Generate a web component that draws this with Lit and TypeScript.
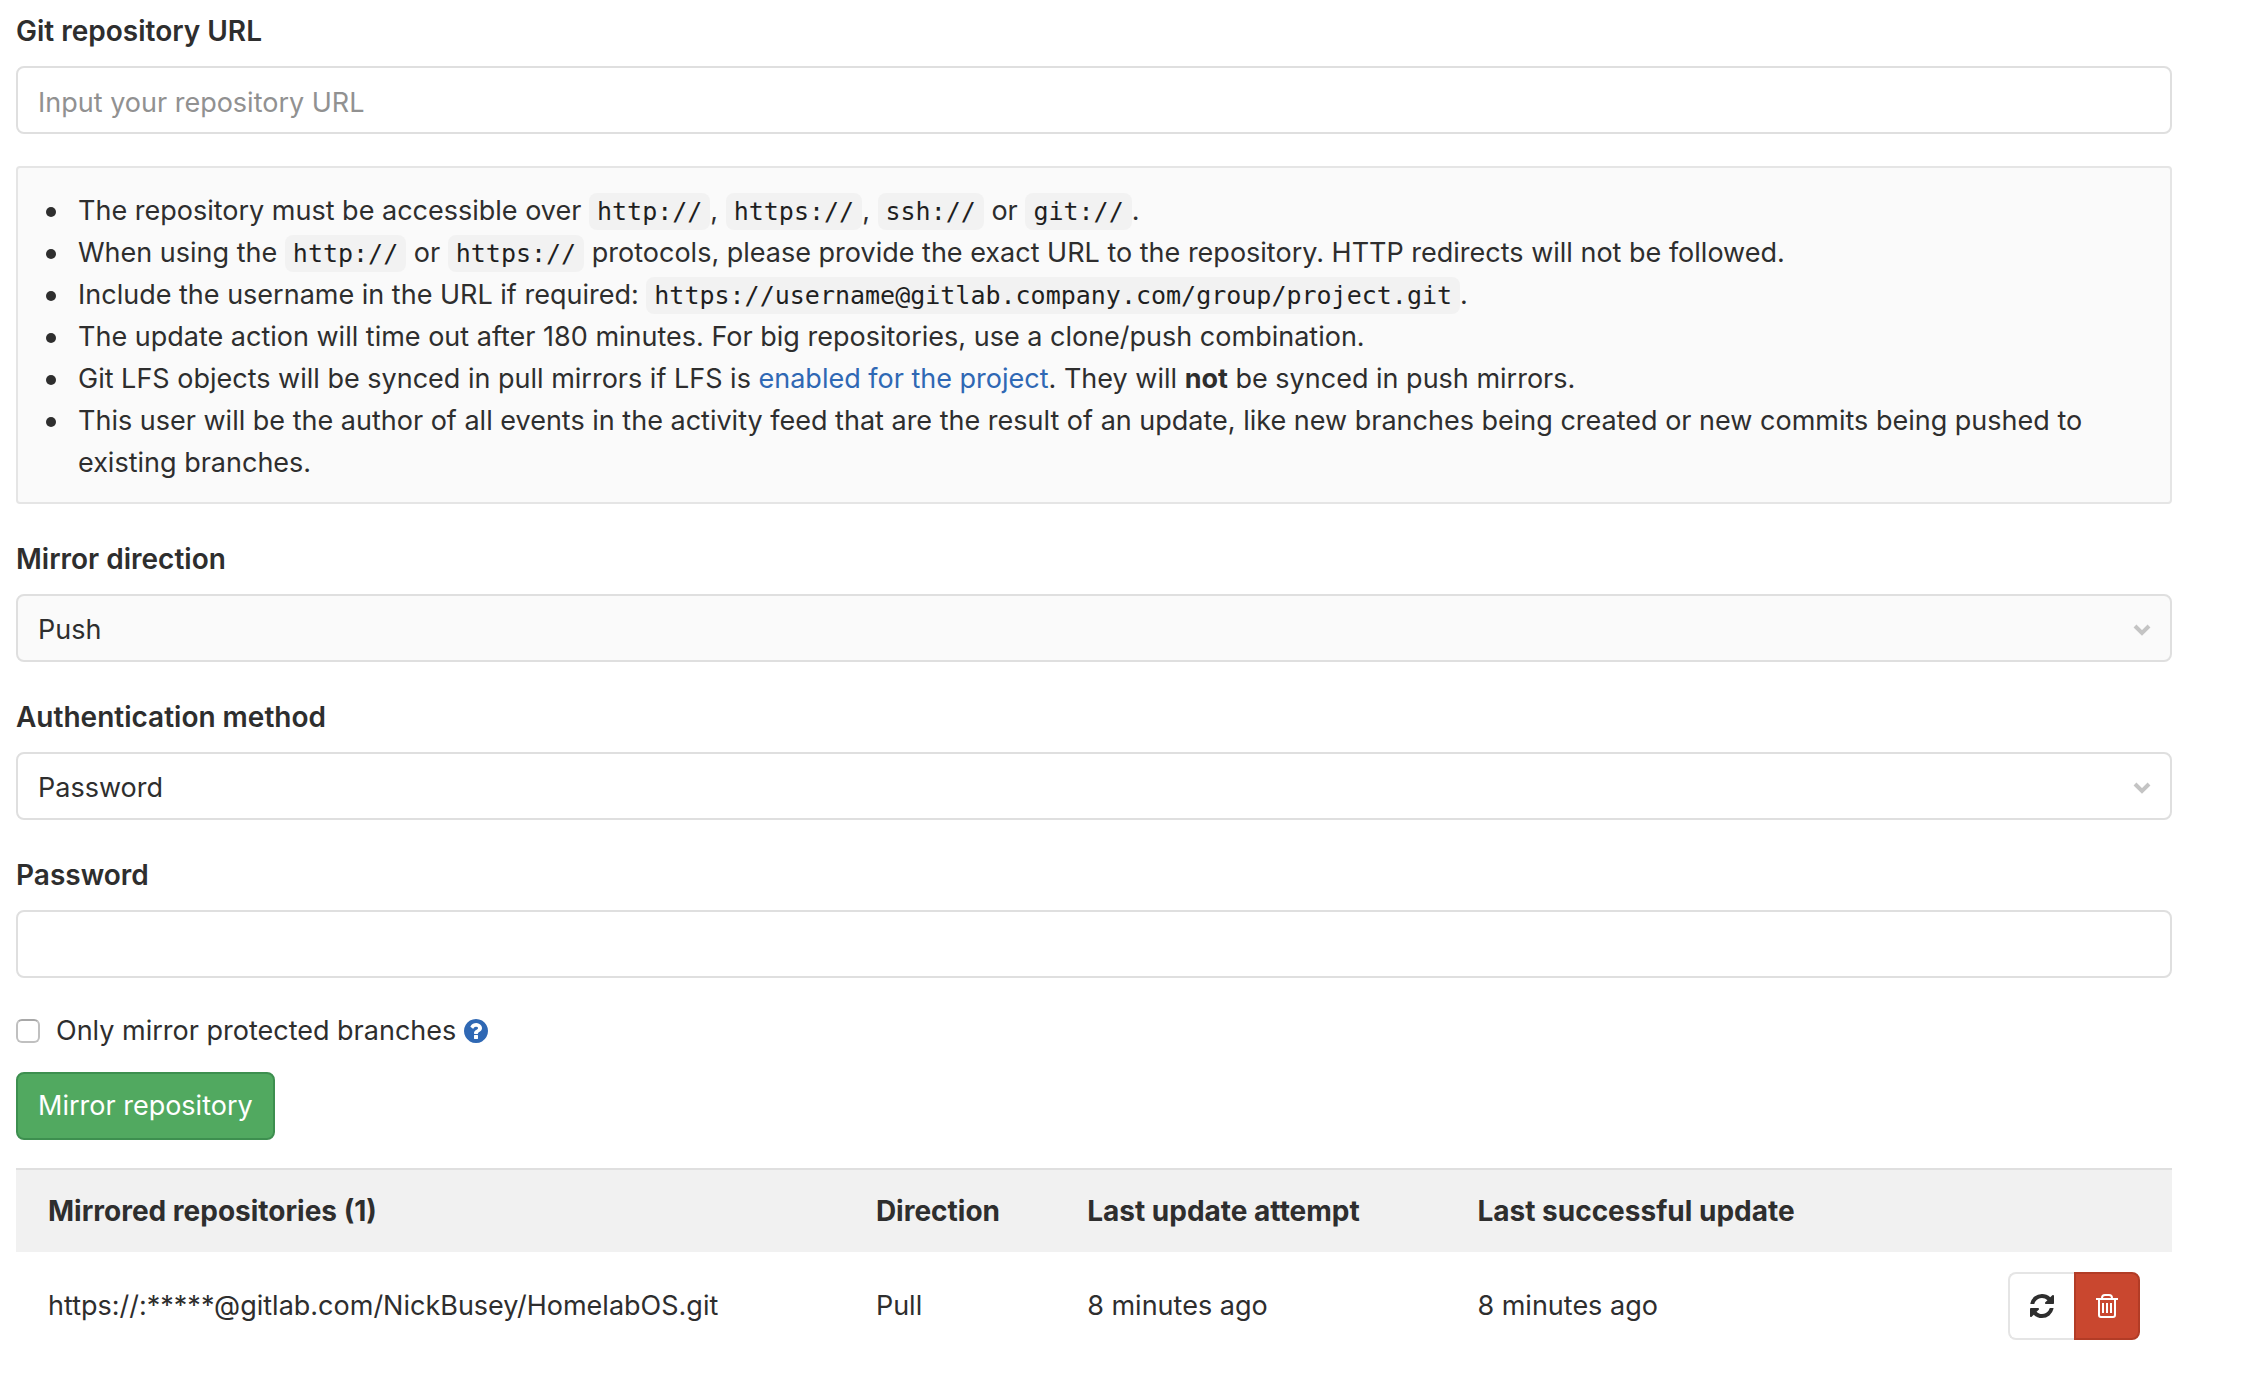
import { LitElement, html, css } from "lit";
import { customElement, state } from "lit/decorators.js";

interface Mirror {
  url: string;
  direction: string;
  lastAttempt: string;
  lastSuccess: string;
}

const chevron = html`<svg class="chevron" viewBox="0 0 18 12" aria-hidden="true">
  <path d="M2 2L9 9L16 2" fill="none" stroke="currentColor" stroke-width="4" />
</svg>`;

const helpIcon = html`<svg class="icon" viewBox="0 128 1536 1536" aria-hidden="true">
  <path
    fill="currentColor"
    d="M896 1376v-192q0-14-9-23t-23-9h-192q-14 0-23 9t-9 23v192q0 14 9 23t23 9h192q14 0 23-9t9-23zm256-672q0-88-55.5-163t-138.5-116-170-41q-243 0-371 213-15 24 8 42l132 100q7 6 19 6 16 0 25-12 53-68 86-92 34-24 86-24 48 0 85.5 26t37.5 59q0 38-20 61t-68 45q-63 28-115.5 86.5t-52.5 125.5v36q0 14 9 23t23 9h192q14 0 23-9t9-23q0-19 21.5-49.5t54.5-49.5q32-18 49-28.5t46-35 44.5-48 28-60.5 12.5-81zm384 192q0 209-103 385.5t-279.5 279.5-385.5 103-385.5-103-279.5-279.5-103-385.5 103-385.5 279.5-279.5 385.5-103 385.5 103 279.5 279.5 103 385.5z"
  />
</svg>`;

const refreshIcon = html`<svg class="icon" viewBox="0 0 1536 1536" aria-hidden="true">
  <path
    fill="currentColor"
    d="M1511 928q0 5-1 7-64 268-268 434.5t-478 166.5q-146 0-282.5-55t-243.5-157l-129 129q-19 19-45 19t-45-19-19-45v-448q0-26 19-45t45-19h448q26 0 45 19t19 45-19 45l-137 137q71 66 161 102t187 36q134 0 250-65t186-179q11-17 53-117 8-23 30-23h192q13 0 22.5 9.5t9.5 22.5zm25-800v448q0 26-19 45t-45 19h-448q-26 0-45-19t-19-45 19-45l138-138q-148-137-349-137-134 0-250 65t-186 179q-11 17-53 117-8 23-30 23h-199q-13 0-22.5-9.5t-9.5-22.5v-7q65-268 270-434.5t480-166.5q146 0 284 55.5t245 156.5l130-129q19-19 45-19t45 19 19 45z"
  />
</svg>`;

const trashIcon = html`<svg class="icon" viewBox="0 0 24 24" aria-hidden="true">
  <g fill="none" stroke="currentColor" stroke-width="2">
    <path d="M1 5H23" />
    <path d="M7 5V4Q7 1 10 1H14Q17 1 17 4V5" />
    <path d="M4 5V21Q4 23 6 23H18Q20 23 20 21V5" />
    <path d="M8 9V19M12 9V19M16 9V19" />
  </g>
</svg>`;

@customElement("app-root")
export class AppRoot extends LitElement {
  @state() private mirrors: Mirror[] = [
    {
      url: "https://:*****@gitlab.com/NickBusey/HomelabOS.git",
      direction: "Pull",
      lastAttempt: "8 minutes ago",
      lastSuccess: "8 minutes ago",
    },
  ];

  static styles = css`
    :host {
      display: block;
      padding: 8px 78px 16px 16px;
      background: #fff;
      color: #2e2e2e;
      font-family: Inter, "Liberation Sans", sans-serif;
      font-size: 27px;
      line-height: 42px;
    }
    * {
      box-sizing: border-box;
    }
    .form {
      display: flex;
      flex-direction: column;
      gap: 32px;
    }
    .field {
      display: flex;
      flex-direction: column;
      gap: 14px;
    }
    .label {
      padding-top: 2px;
      font-size: 28px;
      font-weight: 600;
    }
    .control {
      width: 100%;
      height: 68px;
      margin: 0;
      padding: 4px 20px 0;
      border: 2px solid #dfdfdf;
      border-radius: 8px;
      background: #fff;
      color: inherit;
      font: inherit;
      appearance: none;
    }
    .control::placeholder {
      color: #919191;
      opacity: 1;
    }
    .picker {
      display: grid;
      align-items: center;
    }
    .picker > * {
      grid-area: 1 / 1;
    }
    .muted {
      background: #fafafa;
    }
    .chevron {
      justify-self: end;
      width: 18px;
      height: 12px;
      margin-right: 21px;
      margin-top: 4px;
      color: #c4c4c4;
      pointer-events: none;
    }
    .well {
      padding: 22px 20px 18px;
      border: 2px solid #e5e5e5;
      border-radius: 4px;
      background: #fafafa;
    }
    .notes {
      margin: 0;
      padding: 0 0 0 40px;
      list-style: none;
    }
    .note::before {
      content: "";
      float: left;
      width: 10px;
      height: 10px;
      margin: 17px 22px 0 -32px;
      border-radius: 50%;
      background: currentColor;
    }
    .code {
      padding: 4px 8px;
      border-radius: 8px;
      background: #f2f2f2;
      color: #1f1f1f;
      font-family: "DejaVu Sans Mono", monospace;
      font-size: 25px;
      line-height: 30px;
    }
    .link {
      color: #2f68b4;
      text-decoration: none;
    }
    .strong {
      font-weight: 700;
    }
    .protect {
      display: flex;
      align-items: center;
      gap: 8px;
    }
    .choice {
      display: flex;
      align-items: center;
      gap: 16px;
    }
    .tick {
      width: 24px;
      height: 24px;
      margin: 0;
      border: 2px solid #c0c0c0;
      border-top-color: #a8a8a8;
      border-radius: 6px;
      background: #fff;
      appearance: none;
    }
    .tick:checked {
      background: #2f68b4;
    }
    .help {
      display: flex;
      color: #2f68b4;
    }
    .icon {
      display: block;
      width: 24px;
      height: 24px;
    }
    .button {
      height: 68px;
      padding: 0 20px;
      border: 2px solid #e5e5e5;
      border-radius: 8px;
      background: #fff;
      color: #2e2e2e;
      font: inherit;
      cursor: pointer;
    }
    .submit {
      margin: 20px 0 28px;
      border-color: #3d8f4f;
      background: #51a960;
      color: #fff;
    }
    .mirrors {
      width: 100%;
      border-collapse: separate;
      border-spacing: 0;
      table-layout: fixed;
      text-align: left;
    }
    .head,
    .cell {
      padding: 20px 32px;
      vertical-align: middle;
    }
    .head {
      border-top: 2px solid #dfdfdf;
      background: #f1f1f1;
      font-size: 28px;
      font-weight: 700;
    }
    .wide {
      width: 38.4%;
    }
    .narrow {
      width: 9.8%;
    }
    .medium {
      width: 18.1%;
    }
    .actions {
      display: flex;
      justify-content: flex-end;
    }
    .update,
    .remove {
      display: flex;
      align-items: center;
      justify-content: center;
      width: 66px;
      padding: 0;
    }
    .update {
      border-right: 0;
      border-radius: 8px 0 0 8px;
    }
    .remove {
      border-color: #b23c26;
      border-radius: 0 8px 8px 0;
      background: #c9472f;
      color: #fff;
    }
  `;

  private removeMirror(mirror: Mirror) {
    this.mirrors = this.mirrors.filter((m) => m !== mirror);
  }

  private renderNotes() {
    return html`<div class="well">
      <ul class="notes">
        <li class="note">
          The repository must be accessible over <code class="code">http://</code>,
          <code class="code">https://</code>, <code class="code">ssh://</code> or
          <code class="code">git://</code>.
        </li>
        <li class="note">
          When using the <code class="code">http://</code> or
          <code class="code">https://</code> protocols, please provide the exact URL to the
          repository. HTTP redirects will not be followed.
        </li>
        <li class="note">
          Include the username in the URL if required:
          <code class="code">https://username@gitlab.company.com/group/project.git</code>.
        </li>
        <li class="note">
          The update action will time out after 180 minutes. For big repositories, use a
          clone/push combination.
        </li>
        <li class="note">
          Git LFS objects will be synced in pull mirrors if LFS is
          <a class="link" href="#lfs">enabled for the project</a>. They will
          <b class="strong">not</b> be synced in push mirrors.
        </li>
        <li class="note">
          This user will be the author of all events in the activity feed that are the result
          of an update, like new branches being created or new commits being pushed to
          existing branches.
        </li>
      </ul>
    </div>`;
  }

  private renderMirror(mirror: Mirror) {
    return html`<tr>
      <td class="cell">${mirror.url}</td>
      <td class="cell">${mirror.direction}</td>
      <td class="cell">${mirror.lastAttempt}</td>
      <td class="cell">${mirror.lastSuccess}</td>
      <td class="cell">
        <div class="actions">
          <button class="button update" type="button" aria-label="Update now">
            ${refreshIcon}
          </button>
          <button
            class="button remove"
            type="button"
            aria-label="Remove"
            @click=${() => this.removeMirror(mirror)}
          >
            ${trashIcon}
          </button>
        </div>
      </td>
    </tr>`;
  }

  render() {
    return html`
      <form @submit=${(e: Event) => e.preventDefault()}>
        <div class="form">
          <div class="field">
            <label class="label" for="url">Git repository URL</label>
            <input class="control" id="url" type="text" placeholder="Input your repository URL" />
          </div>
          ${this.renderNotes()}
          <div class="field">
            <label class="label" for="direction">Mirror direction</label>
            <div class="picker">
              <select class="control muted" id="direction">
                <option>Push</option>
              </select>
              ${chevron}
            </div>
          </div>
          <div class="field">
            <label class="label" for="method">Authentication method</label>
            <div class="picker">
              <select class="control" id="method">
                <option>Password</option>
              </select>
              ${chevron}
            </div>
          </div>
          <div class="field">
            <label class="label" for="password">Password</label>
            <input class="control" id="password" type="password" autocomplete="new-password" />
          </div>
          <div class="protect">
            <label class="choice">
              <input class="tick" type="checkbox" />
              Only mirror protected branches
            </label>
            <a class="help" href="#protected-branches" aria-label="Help">${helpIcon}</a>
          </div>
        </div>
        <button class="button submit" type="submit">Mirror repository</button>
      </form>
      <table class="mirrors">
        <thead>
          <tr>
            <th class="head wide">Mirrored repositories (${this.mirrors.length})</th>
            <th class="head narrow">Direction</th>
            <th class="head medium">Last update attempt</th>
            <th class="head medium">Last successful update</th>
            <th class="head"></th>
          </tr>
        </thead>
        <tbody>
          ${this.mirrors.map((mirror) => this.renderMirror(mirror))}
        </tbody>
      </table>
    `;
  }
}
